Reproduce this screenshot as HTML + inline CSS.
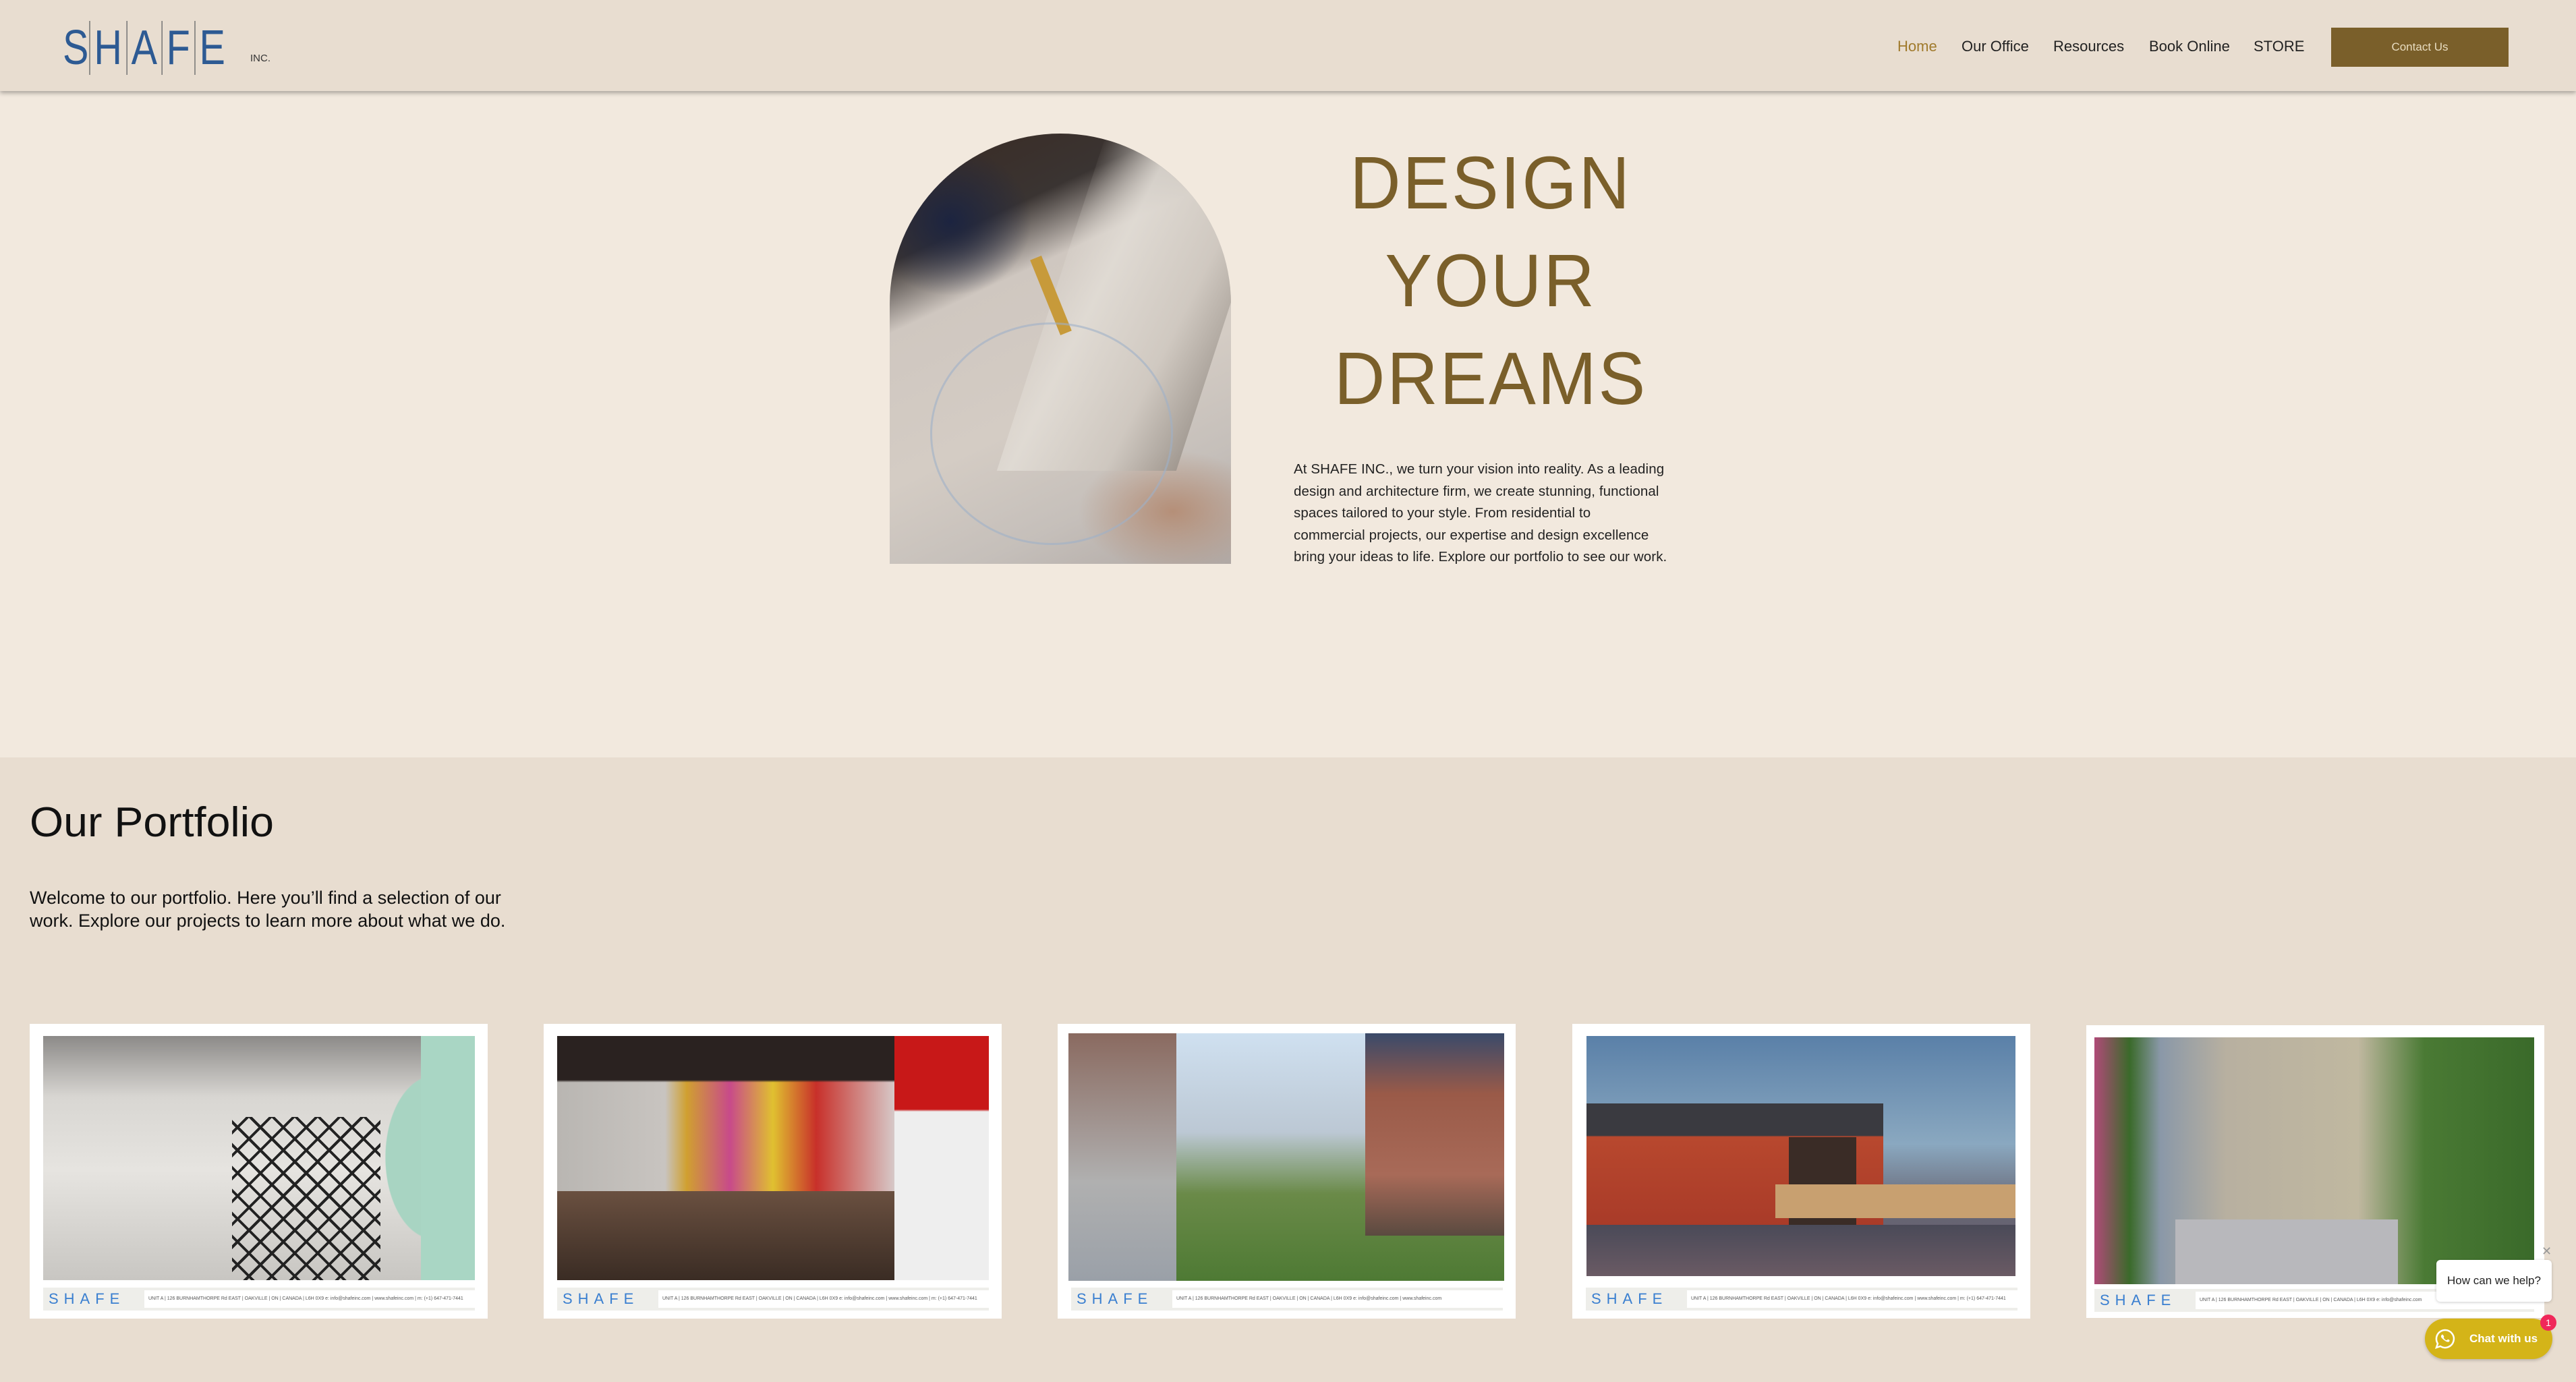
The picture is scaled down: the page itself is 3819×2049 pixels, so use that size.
<!DOCTYPE html>
<html><head><meta charset="utf-8"><style>
*{margin:0;padding:0;box-sizing:border-box}
body{width:3819px;height:2049px;overflow:hidden;background:#e8ddd0;font-family:"Liberation Sans",sans-serif;position:relative}
.abs{position:absolute}
header{position:absolute;left:0;top:0;width:3819px;height:135px;background:#e8ddd0;box-shadow:0 3px 6px rgba(0,0,0,.3);z-index:5}
.logo{left:93px;top:30px;font-size:72px;color:#2d5a93;letter-spacing:1px;font-weight:300;transform:scaleX(.8);transform-origin:left}
.logo span{border-left:2px solid #7a7a7a;padding:0 7px}
.nav{top:56px;font-size:22px;color:#222}
.btn{left:3456px;top:41px;width:263px;height:58px;background:#7a5f2a;color:#e8dcc0;font-size:17px;text-align:center;line-height:58px}
.hero{left:0;top:135px;width:3819px;height:988px;background:#f2e9de}
.arch{left:1319px;top:198px;width:506px;height:638px;border-radius:253px 253px 0 0;overflow:hidden;
background:
radial-gradient(ellipse 140px 90px at 420px 560px,#b58f78 0,rgba(181,143,120,0) 100%),
radial-gradient(ellipse 120px 110px at 90px 130px,#1c2440 0,rgba(28,36,64,0) 100%),
linear-gradient(155deg,#3a2a22 0%,#3a3432 22%,#cfc7c0 34%,#d4ccc4 60%,#c5bfba 80%,#b0a8a4 100%)}
.big{color:#7a5f2a;font-size:110px;text-align:center;width:700px;left:1860px;transform:scaleX(.95);transform-origin:center;letter-spacing:3px}
.para{left:1918px;top:680px;font-size:20.5px;line-height:32.5px;color:#222;white-space:nowrap;letter-spacing:.1px}
h2{position:absolute;left:44px;top:1184px;font-size:62px;font-weight:400;color:#111;font-family:"Liberation Sans",sans-serif;transform:scaleX(1.04);transform-origin:left}
.wel{left:44px;top:1314px;font-size:27px;line-height:34px;color:#111;white-space:nowrap}
.card{background:#fff;width:679px;height:437px;top:1518px}
.img{position:absolute;left:20px;top:18px;width:640px;height:362px}
.foot{position:absolute;left:20px;top:391px;width:640px;height:34px;background:#eeeeea;display:flex;align-items:center}
.foot .l{width:150px;height:30px;color:#3a7fd0;font-size:22px;letter-spacing:8px;padding-left:8px;line-height:30px}
.foot .r{flex:1;height:26px;background:#fff;font-size:7px;color:#555;line-height:26px;padding-left:6px;white-space:nowrap;overflow:hidden}
</style></head><body>
<header>
<div class="abs logo">S<span>H</span><span>A</span><span>F</span><span>E</span></div>
<div class="abs" style="left:371px;top:78px;font-size:15px;color:#333">INC.</div>
<div class="abs nav" style="left:2813px;color:#a07a2c">Home</div>
<div class="abs nav" style="left:2908px">Our Office</div>
<div class="abs nav" style="left:3044px">Resources</div>
<div class="abs nav" style="left:3186px">Book Online</div>
<div class="abs nav" style="left:3341px">STORE</div>
<div class="abs btn">Contact Us</div>
</header>
<div class="abs hero"></div>
<div class="abs arch">
<div class="abs" style="left:240px;top:0;width:266px;height:500px;background:linear-gradient(100deg,rgba(220,215,205,0) 0,#e2ddd6 30%,#cfc8c0 70%,#9c948c 100%);transform:skewX(-18deg);opacity:.85"></div>
<div class="abs" style="left:230px;top:180px;width:18px;height:120px;background:#c79a3a;transform:rotate(-22deg)"></div>
<div class="abs" style="left:60px;top:280px;width:360px;height:330px;border:3px solid #9fb0c8;border-radius:50%;opacity:.6"></div>
</div>
<div class="abs big" style="top:208px">DESIGN</div>
<div class="abs big" style="top:353px">YOUR</div>
<div class="abs big" style="top:498px">DREAMS</div>
<div class="abs para">At SHAFE INC., we turn your vision into reality. As a leading<br>design and architecture firm, we create stunning, functional<br>spaces tailored to your style. From residential to<br>commercial projects, our expertise and design excellence<br>bring your ideas to life. Explore our portfolio to see our work.</div>
<h2>Our Portfolio</h2>
<div class="abs wel">Welcome to our portfolio. Here you’ll find a selection of our<br>work. Explore our projects to learn more about what we do.</div>

<div class="abs card" style="left:44px"><div class="img" style="background:radial-gradient(ellipse 120px 200px at 580px 180px,#a8d4c2 0,#a8d4c2 60%,rgba(0,0,0,0) 61%),linear-gradient(180deg,#8c8a88 0,#d8d6d2 25%,#e6e4e0 55%,#c8c6c2 100%)">
<div class="abs" style="left:280px;top:120px;width:220px;height:242px;background:repeating-linear-gradient(45deg,transparent 0 20px,#222 20px 24px),repeating-linear-gradient(-45deg,transparent 0 20px,#222 20px 24px)"></div>
<div class="abs" style="left:560px;top:0;width:80px;height:362px;background:#a9d6c4"></div></div>
<div class="foot"><div class="l">SHAFE</div><div class="r">UNIT A | 126 BURNHAMTHORPE Rd EAST | OAKVILLE | ON | CANADA | L6H 0X9 e: info@shafeinc.com | www.shafeinc.com | m: (+1) 647-471-7441</div></div></div>

<div class="abs card" style="left:806px"><div class="img" style="background:linear-gradient(180deg,#2a2220 0,#2a2220 18%,rgba(0,0,0,0) 19%),linear-gradient(90deg,#b9b6b2 0,#c8c4c0 25%,#d0a030 30%,#c84a8a 40%,#e0c030 50%,#c8302a 60%,#d8d8d8 80%,#f0f0f0 100%)">
<div class="abs" style="left:0;top:230px;width:500px;height:132px;background:linear-gradient(180deg,#6a5040,#3a2c24)"></div>
<div class="abs" style="left:500px;top:0;width:140px;height:362px;background:linear-gradient(180deg,#c81818 0,#c81818 30%,#eeeeee 31%)"></div></div>
<div class="foot"><div class="l">SHAFE</div><div class="r">UNIT A | 126 BURNHAMTHORPE Rd EAST | OAKVILLE | ON | CANADA | L6H 0X9 e: info@shafeinc.com | www.shafeinc.com | m: (+1) 647-471-7441</div></div></div>

<div class="abs card" style="left:1568px"><div class="img" style="left:16px;top:14px;width:646px;height:367px;background:linear-gradient(180deg,#cfe0f0 0,#bcc8d4 40%,#6a8a48 65%,#4e7a34 100%)">
<div class="abs" style="left:0;top:0;width:160px;height:367px;background:linear-gradient(180deg,#8a6a60,#b0b0b0 60%,#9aa0a8)"></div>
<div class="abs" style="left:440px;top:0;width:206px;height:300px;background:linear-gradient(180deg,#3a4a6a 0,#9a5a48 30%,#a86a58 70%,#5a4a40)"></div></div>
<div class="foot"><div class="l">SHAFE</div><div class="r">UNIT A | 126 BURNHAMTHORPE Rd EAST | OAKVILLE | ON | CANADA | L6H 0X9 e: info@shafeinc.com | www.shafeinc.com</div></div></div>

<div class="abs card" style="left:2331px"><div class="img" style="left:21px;width:636px;height:356px;background:linear-gradient(180deg,#5a80a8 0,#8aa8c0 45%,#6a6a78 70%,#5a5060 100%)">
<div class="abs" style="left:0;top:100px;width:440px;height:190px;background:linear-gradient(180deg,#3a3a40 0,#3a3a40 25%,#b8482e 26%,#a83a28 100%)"></div>
<div class="abs" style="left:300px;top:150px;width:100px;height:150px;background:#3a2c26"></div>
<div class="abs" style="left:280px;top:220px;width:356px;height:50px;background:#c8a070"></div>
<div class="abs" style="left:0;top:280px;width:636px;height:76px;background:linear-gradient(180deg,#4a4a58,#6a5a64)"></div></div>
<div class="foot"><div class="l">SHAFE</div><div class="r">UNIT A | 126 BURNHAMTHORPE Rd EAST | OAKVILLE | ON | CANADA | L6H 0X9 e: info@shafeinc.com | www.shafeinc.com | m: (+1) 647-471-7441</div></div></div>

<div class="abs card" style="left:3093px;top:1520px;height:434px"><div class="img" style="left:12px;width:652px;height:366px;background:linear-gradient(90deg,#b04a78 0,#3a6a2a 8%,#8a98a8 15%,#b8b0a0 30%,#c0b8a0 60%,#4a7a34 75%,#3a6a2a 100%)">
<div class="abs" style="left:120px;top:270px;width:330px;height:96px;background:#b8b8bc"></div></div>
<div class="foot" style="left:12px;width:652px"><div class="l">SHAFE</div><div class="r">UNIT A | 126 BURNHAMTHORPE Rd EAST | OAKVILLE | ON | CANADA | L6H 0X9 e: info@shafeinc.com</div></div></div>

<div class="abs" style="left:3612px;top:1868px;width:171px;height:62px;background:#fff;border-radius:6px;box-shadow:0 1px 4px rgba(0,0,0,.2);font-size:17px;color:#222;text-align:center;line-height:62px">How can we help?</div>
<div class="abs" style="left:3768px;top:1845px;font-size:18px;color:#999">✕</div>
<div class="abs" style="left:3595px;top:1955px;width:189px;height:60px;background:#d4b418;border-radius:30px;box-shadow:0 2px 5px rgba(0,0,0,.2)">
<svg class="abs" style="left:14px;top:14px" width="32" height="32" viewBox="0 0 32 32"><path d="M16 3a13 13 0 0 0-11 20l-2 6 6-2A13 13 0 1 0 16 3z" fill="none" stroke="#fff" stroke-width="2.5"/><path d="M11 10c1-1 2 0 3 2s-1 2 0 3 2 3 4 3 1-2 3-1 2 2 1 3-3 1-6-1-6-5-6-6 0-2 1-3z" fill="#fff"/></svg>
<div class="abs" style="left:66px;top:0;line-height:60px;color:#fff;font-size:17px;font-weight:bold">Chat with us</div></div>
<div class="abs" style="left:3766px;top:1949px;width:24px;height:24px;border-radius:50%;background:#f0285a;color:#fff;font-size:14px;text-align:center;line-height:24px">1</div>
</body></html>
